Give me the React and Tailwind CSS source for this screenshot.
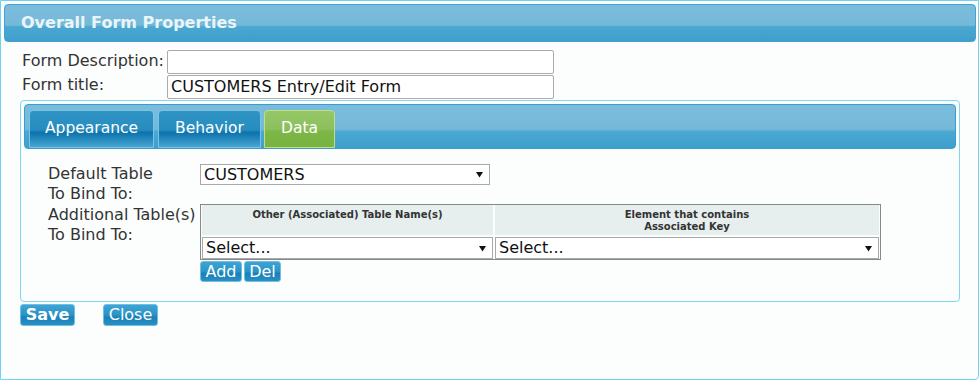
import React from "react";

const font = { fontFamily: '"DejaVu Sans", Verdana, sans-serif' };

function Arrow() {
  return (
    <svg width="7" height="7" viewBox="0 0 7 7" className="shrink-0">
      <path d="M0 1 L7 1 L3.5 6.5 Z" fill="#111" />
    </svg>
  );
}

function FakeSelect({ value, className }) {
  return (
    <div
      className={`flex items-center justify-between border border-[#a9a9a9] bg-white pl-[3px] pr-[6px] text-[16px] leading-none text-[#111] ${className}`}
    >
      <span>{value}</span>
      <Arrow />
    </div>
  );
}

function BlueButton({ children, bold, className }) {
  return (
    <button
      className={`flex items-center justify-center rounded-[3px] border border-[#6fc0e4] bg-[linear-gradient(to_bottom,#3ea4d4_0%,#2b93c6_50%,#1a80b8_60%,#2a8fc2_100%)] text-[16px] leading-none text-white ${
        bold ? "font-bold" : ""
      } ${className}`}
    >
      {children}
    </button>
  );
}

function Tab({ label, active, className }) {
  return (
    <div
      className={`flex h-[38px] items-center justify-center rounded-t-[4px] border text-[15.5px] text-white ${
        active
          ? "border-[#bfe08a] bg-[linear-gradient(to_bottom,#95c768_0%,#8cc05c_50%,#7cb645_58%,#79b342_100%)]"
          : "border-[#78c4e6] bg-[linear-gradient(to_bottom,#2f94c4_0%,#278cbf_52%,#0e73ab_60%,#2589bd_78%,#4aa6d0_100%)]"
      } ${className}`}
    >
      {label}
    </div>
  );
}

export default function App() {
  return (
    <div className="h-[381px] w-[979px] bg-white" style={font}>
      <div className="flex h-[380px] flex-col rounded-br-[4px] border border-[#6fd3f5] bg-[#fcfefe]">
        {/* title bar */}
        <div className="ml-[3px] mr-[2px] mt-[3px] flex h-[38px] items-center rounded-[4px] border border-[#46a0d0] bg-[linear-gradient(to_bottom,#7abcdb_0%,#75b9d8_56%,#4aa8d1_60%,#3f9fcc_100%)] pl-[16px]">
          <span className="text-[16px] font-bold text-[#eaf5fb]">
            Overall Form Properties
          </span>
        </div>

        {/* form fields */}
        <div className="mt-[8px] grid grid-cols-[145px_387px] gap-y-[1px] pl-[21px] text-[16px] text-[#333]">
          <div className="leading-[22px]">Form Description:</div>
          <div className="h-[24px] rounded-[2px] border border-[#aaa] bg-white" />
          <div className="leading-[20px]">Form title:</div>
          <div className="flex h-[24px] items-center rounded-[2px] border border-[#aaa] bg-white pl-[3px] text-[#111]">
            CUSTOMERS Entry/Edit Form
          </div>
        </div>

        {/* inner panel */}
        <div className="ml-[19px] mt-[1px] flex h-[202px] w-[940px] flex-col rounded-[4px] border border-[#7fd6f5] p-[3px]">
          <div className="flex h-[45px] items-end rounded-[4px] border border-[#3f9bcf] bg-[linear-gradient(to_bottom,#7abcdb_0%,#75b9d8_56%,#4aa8d1_62%,#3f9fcc_100%)] pl-[4px]">
            <Tab label="Appearance" className="mr-[4px] w-[125px]" />
            <Tab label="Behavior" className="mr-[3px] w-[103px]" />
            <Tab label="Data" active className="w-[71px]" />
          </div>

          <div className="mt-[15px] grid grid-cols-[152px_auto] pl-[24px] text-[16px] leading-[20px] text-[#333]">
            <div className="pb-[1px]">
              Default Table
              <br />
              To Bind To:
            </div>
            <div>
              <FakeSelect value="CUSTOMERS" className="h-[21px] w-[290px]" />
            </div>
            <div>
              Additional Table(s)
              <br />
              To Bind To:
            </div>
            <div className="-mt-[1px]">
              <div className="grid w-[681px] grid-cols-[291px_384px] gap-[2px] border border-[#888] px-[1px] pb-[0px] pt-[0px]">
                <div className="flex h-[30px] justify-center bg-[#e6eeee] pt-[4px] text-[10px] font-bold leading-[12px] text-[#333]">
                  Other (Associated) Table Name(s)
                </div>
                <div className="flex h-[30px] flex-col items-center bg-[#e6eeee] pt-[4px] text-[10px] font-bold leading-[12px] text-[#333]">
                  <span>Element that contains</span>
                  <span>Associated Key</span>
                </div>
                <FakeSelect value="Select..." className="h-[22px]" />
                <FakeSelect value="Select..." className="h-[22px]" />
              </div>
              <div className="mt-[1px] flex gap-[2px]">
                <BlueButton className="h-[21px] w-[42px]">Add</BlueButton>
                <BlueButton className="h-[21px] w-[37px]">Del</BlueButton>
              </div>
            </div>
          </div>
        </div>

        {/* footer buttons */}
        <div className="ml-[19px] mt-[2px] flex gap-[28px]">
          <BlueButton bold className="h-[22px] w-[55px]">
            Save
          </BlueButton>
          <BlueButton className="h-[22px] w-[55px]">Close</BlueButton>
        </div>
      </div>
    </div>
  );
}
